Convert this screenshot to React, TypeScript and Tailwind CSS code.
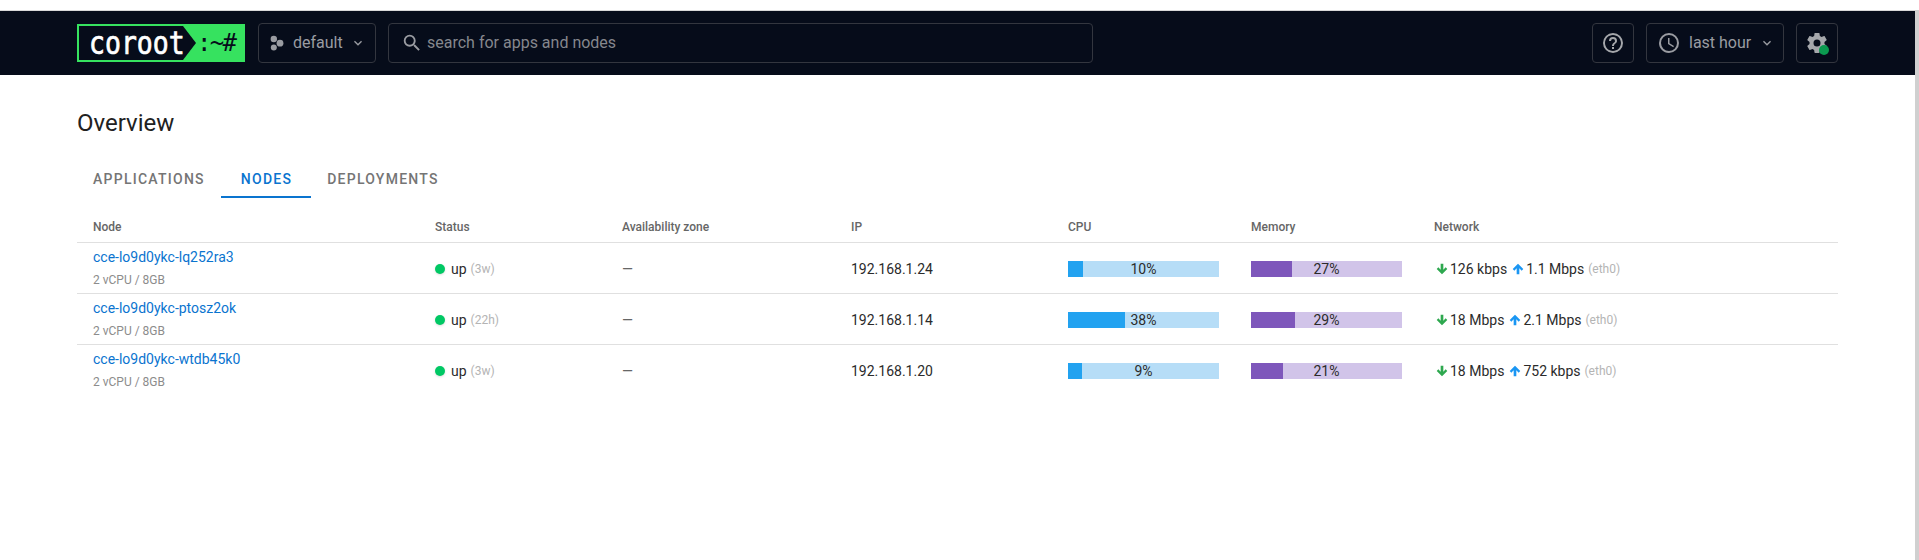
import React from 'react';

const mdi = {
  help: 'M11,18H13V16H11V18M12,2A10,10 0 0,0 2,12A10,10 0 0,0 12,22A10,10 0 0,0 22,12A10,10 0 0,0 12,2M12,20C7.59,20 4,16.41 4,12C4,7.59 7.59,4 12,4C16.41,4 20,7.59 20,12C20,16.41 16.41,20 12,20M12,6A4,4 0 0,0 8,10H10A2,2 0 0,1 12,8A2,2 0 0,1 14,10C14,12 11,11.75 11,15H13C13,12.75 16,12.5 16,10A4,4 0 0,0 12,6Z',
  clock: 'M12,20A8,8 0 0,0 20,12A8,8 0 0,0 12,4A8,8 0 0,0 4,12A8,8 0 0,0 12,20M12,2A10,10 0 0,1 22,12A10,10 0 0,1 12,22C6.47,22 2,17.5 2,12A10,10 0 0,1 12,2M12.5,7V12.25L17,14.92L16.25,16.15L11,13V7H12.5Z',
  magnify: 'M9.5,3A6.5,6.5 0 0,1 16,9.5C16,11.11 15.41,12.59 14.44,13.73L14.71,14H15.5L20.5,19L19,20.5L14,15.5V14.71L13.73,14.44C12.59,15.41 11.11,16 9.5,16A6.5,6.5 0 0,1 3,9.5A6.5,6.5 0 0,1 9.5,3M9.5,5C7,5 5,7 5,9.5C5,12 7,14 9.5,14C12,14 14,12 14,9.5C14,7 12,5 9.5,5Z',
  cog: 'M12,15.5A3.5,3.5 0 0,1 8.5,12A3.5,3.5 0 0,1 12,8.5A3.5,3.5 0 0,1 15.5,12A3.5,3.5 0 0,1 12,15.5M19.43,12.97C19.47,12.65 19.5,12.33 19.5,12C19.5,11.67 19.47,11.34 19.43,11L21.54,9.37C21.73,9.22 21.78,8.95 21.66,8.73L19.66,5.27C19.54,5.05 19.27,4.96 19.05,5.05L16.56,6.05C16.04,5.66 15.5,5.32 14.87,5.07L14.5,2.42C14.46,2.18 14.25,2 14,2H10C9.75,2 9.54,2.18 9.5,2.42L9.13,5.07C8.5,5.32 7.96,5.66 7.44,6.05L4.95,5.05C4.73,4.96 4.46,5.05 4.34,5.27L2.34,8.73C2.21,8.95 2.27,9.22 2.46,9.37L4.57,11C4.53,11.34 4.5,11.67 4.5,12C4.5,12.33 4.53,12.65 4.57,12.97L2.46,14.63C2.27,14.78 2.21,15.05 2.34,15.27L4.34,18.73C4.46,18.95 4.73,19.03 4.95,18.95L7.44,17.94C7.96,18.34 8.5,18.68 9.13,18.93L9.5,21.58C9.54,21.82 9.75,22 10,22H14C14.25,22 14.46,21.82 14.5,21.58L14.87,18.93C15.5,18.67 16.04,18.34 16.56,17.94L19.05,18.95C19.27,19.03 19.54,18.95 19.66,18.73L21.66,15.27C21.78,15.05 21.73,14.78 21.54,14.63L19.43,12.97Z',
  chevron: 'M7.41,8.58L12,13.17L16.59,8.58L18,10L12,16L6,10L7.41,8.58Z',
  down: 'M10,4H14V13L17.5,9.5L19.92,11.92L12,19.84L4.08,11.92L6.5,9.5L10,13V4Z',
  up: 'M14,20H10V11L6.5,14.5L4.08,12.08L12,4.16L19.92,12.08L17.5,14.5L14,11V20Z',
};

function Icon({ d, className }: { d: string; className?: string }) {
  return (
    <svg viewBox="0 0 24 24" fill="currentColor" className={className}>
      <path d={d} />
    </svg>
  );
}

const nodes = [
  { name: 'cce-lo9d0ykc-lq252ra3', uptime: '3w', ip: '192.168.1.24', cpu: 10, mem: 27, rx: '126 kbps', tx: '1.1 Mbps' },
  { name: 'cce-lo9d0ykc-ptosz2ok', uptime: '22h', ip: '192.168.1.14', cpu: 38, mem: 29, rx: '18 Mbps', tx: '2.1 Mbps' },
  { name: 'cce-lo9d0ykc-wtdb45k0', uptime: '3w', ip: '192.168.1.20', cpu: 9, mem: 21, rx: '18 Mbps', tx: '752 kbps' },
];

function Logo() {
  return (
    <div className="relative flex h-[38px] w-[168px] items-center bg-[#36e25f]">
      <svg viewBox="0 0 168 38" className="absolute inset-0 h-full w-full">
        <polygon points="2,2 106,2 119,19 106,36 2,36" fill="#060c1a" />
      </svg>
      <span className="relative ml-[12px] w-[110px] scale-y-[1.18] font-['DejaVu_Sans_Mono',monospace] text-[26.5px] leading-none text-white [-webkit-text-stroke:0.6px_white]">
        coroot
      </span>
      <span className="relative -ml-[2px] font-['DejaVu_Sans_Mono',monospace] text-[24px] leading-none tracking-[-1.7px] text-[#060c1a]">
        :~#
      </span>
    </div>
  );
}

function Bar({ value, fill, track }: { value: number; fill: string; track: string }) {
  return (
    <div className={`relative h-4 w-[151px] ${track}`}>
      <div className={`absolute inset-y-0 left-0 ${fill}`} style={{ width: `${value}%` }} />
      <span className="relative block text-center text-sm leading-4 text-[#2b2b2b]">{value}%</span>
    </div>
  );
}

export default function App() {
  return (
    <div className="flex h-[560px] flex-col overflow-hidden bg-white pt-[10px] font-['Roboto',sans-serif]">
      <div className="flex min-h-0 flex-1">
        <div className="w-[1915px]">
          <header className="flex h-[65px] items-center border-t border-[#d8d8d8] bg-[#060c1a] px-[77px]">
            <Logo />
            <button className="ml-[13px] flex h-[40px] w-[118px] items-center rounded border border-[#33363f] pl-[10px] text-base text-[#9a9ca2]">
              <svg viewBox="0 0 16 16" fill="currentColor" className="h-4 w-4">
                <circle cx="4.8" cy="4" r="3.2" />
                <circle cx="11" cy="8.2" r="3.4" />
                <circle cx="4.8" cy="12.5" r="3" />
              </svg>
              <span className="ml-[8px]">default</span>
              <Icon d={mdi.chevron} className="ml-[7px] h-4 w-4" />
            </button>
            <div className="ml-[12px] flex h-[40px] w-[705px] items-center rounded border border-[#33363f] pl-[12px] text-base text-[#85878d]">
              <Icon d={mdi.magnify} className="h-[22px] w-[22px] text-[#9a9ca2]" />
              <span className="ml-[4px]">search for apps and nodes</span>
            </div>
            <div className="ml-auto flex items-center gap-[12px]">
              <button className="flex h-[40px] w-[42px] items-center justify-center rounded border border-[#33363f] text-[#a5a7ab]">
                <Icon d={mdi.help} className="h-6 w-6" />
              </button>
              <button className="flex h-[40px] w-[138px] items-center rounded border border-[#33363f] pl-[10px] text-base text-[#9a9ca2]">
                <Icon d={mdi.clock} className="h-6 w-6" />
                <span className="ml-[8px]">last hour</span>
                <Icon d={mdi.chevron} className="ml-[8px] h-4 w-4" />
              </button>
              <button className="relative flex h-[40px] w-[42px] items-center justify-center rounded border border-[#33363f] text-[#a5a7ab]">
                <Icon d={mdi.cog} className="h-6 w-6" />
                <span className="absolute right-[8px] bottom-[7px] h-[10px] w-[10px] rounded-full bg-[#0b9a50]" />
              </button>
            </div>
          </header>

          <main className="px-[77px]">
            <h1 className="pt-[32px] text-2xl leading-8 font-normal text-[#212121]">Overview</h1>

            <nav className="mt-[19px] flex h-[40px] text-sm font-medium tracking-[1.25px] text-[#757575] uppercase">
              <span className="flex items-center px-4 pt-[2px]">Applications</span>
              <span className="flex items-center border-b-2 border-[#0a74cf] pt-[4px] pr-[19px] pl-[20px] text-[#0a74cf]">Nodes</span>
              <span className="flex items-center px-4 pt-[2px]">Deployments</span>
            </nav>

            <table className="mt-[12px] w-[1761px] table-fixed border-collapse text-sm text-[#2b2b2b]">
              <colgroup>
                <col className="w-[342px]" />
                <col className="w-[187px]" />
                <col className="w-[229px]" />
                <col className="w-[217px]" />
                <col className="w-[183px]" />
                <col className="w-[183px]" />
                <col />
              </colgroup>
              <thead>
                <tr className="h-[32px] border-b border-[#e0e0e0] text-left text-xs text-[#666666]">
                  <th className="pt-[2px] pl-4 font-medium">Node</th>
                  <th className="pt-[2px] pl-4 font-medium">Status</th>
                  <th className="pt-[2px] pl-4 font-medium">Availability zone</th>
                  <th className="pt-[2px] pl-4 font-medium">IP</th>
                  <th className="pt-[2px] pl-4 font-medium">CPU</th>
                  <th className="pt-[2px] pl-4 font-medium">Memory</th>
                  <th className="pt-[2px] pl-4 font-medium">Network</th>
                </tr>
              </thead>
              <tbody>
                {nodes.map((n, i) => (
                  <tr key={n.name} className={`h-[51px] ${i < nodes.length - 1 ? 'border-b border-[#e0e0e0]' : ''}`}>
                    <td className="pl-4">
                      <a className="block leading-5 text-[#0a74cf]">{n.name}</a>
                      <div className="mt-[5px] text-xs leading-4 text-[#8c8c8c]">2 vCPU / 8GB</div>
                    </td>
                    <td className="pt-[2px] pl-4">
                      <div className="flex items-center">
                        <span className="h-[10px] w-[10px] rounded-full bg-[#00c864] shadow-sm" />
                        <span className="ml-[6px]">up</span>
                        <span className="ml-[4px] text-xs text-[#b4b4b4]">({n.uptime})</span>
                      </div>
                    </td>
                    <td className="pt-[2px] pl-4 text-[#666666]">—</td>
                    <td className="pt-[2px] pl-4">{n.ip}</td>
                    <td className="pt-[2px] pl-4">
                      <Bar value={n.cpu} fill="bg-[#22a2f0]" track="bg-[#b6ddf7]" />
                    </td>
                    <td className="pt-[2px] pl-4">
                      <Bar value={n.mem} fill="bg-[#7e57bb]" track="bg-[#d1c4e9]" />
                    </td>
                    <td className="pt-[2px] pl-4">
                      <div className="flex items-center">
                        <Icon d={mdi.down} className="h-4 w-4 text-[#2ea84f]" />
                        <span>{n.rx}</span>
                        <Icon d={mdi.up} className="ml-[3px] h-4 w-4 text-[#1a96f3]" />
                        <span>{n.tx}</span>
                        <span className="ml-[4px] text-xs text-[#b4b4b4]">(eth0)</span>
                      </div>
                    </td>
                  </tr>
                ))}
              </tbody>
            </table>
          </main>
        </div>
        <div className="w-1 bg-[#d0d0d0]" />
      </div>
    </div>
  );
}
